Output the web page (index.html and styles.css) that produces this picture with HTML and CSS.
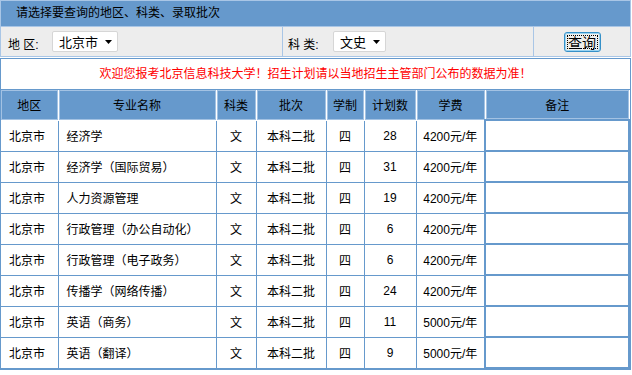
FILE: index.html
```html
<!DOCTYPE html>
<html lang="zh-CN">
<head>
<meta charset="utf-8">
<title>招生计划查询</title>
<link rel="stylesheet" href="styles.css">
</head>
<body>
<div class="page">
  <div class="titlebar">请选择要查询的地区、科类、录取批次</div>
  <form class="filters">
    <div class="fcell fcell-region">
      <span class="flabel flabel-region">地 区:</span>
      <span class="select select-region"><span>北京市</span><svg class="caret" width="7" height="4" viewBox="0 0 7 4"><path d="M0 0H7L3.5 4Z" fill="#000"/></svg></span>
    </div>
    <div class="fcell fcell-type">
      <span class="flabel flabel-type">科 类:</span>
      <span class="select select-type"><span>文史</span><svg class="caret" width="7" height="4" viewBox="0 0 7 4"><path d="M0 0H7L3.5 4Z" fill="#000"/></svg></span>
    </div>
    <div class="fcell fcell-btn">
      <button type="button" class="btn">查询</button>
    </div>
  </form>
  <div class="results">
    <div class="notice">欢迎您报考北京信息科技大学！招生计划请以当地招生主管部门公布的数据为准！</div>
    <table class="grid">
      <thead>
        <tr>
          <th class="c-area">地区</th>
          <th class="c-major">专业名称</th>
          <th class="c-type">科类</th>
          <th class="c-batch">批次</th>
          <th class="c-years">学制</th>
          <th class="c-plan">计划数</th>
          <th class="c-fee">学费</th>
          <th class="c-note">备注</th>
        </tr>
      </thead>
      <tbody>
        <tr><td class="left">北京市</td><td class="left">经济学</td><td>文</td><td>本科二批</td><td>四</td><td>28</td><td>4200元/年</td><td class="note"></td></tr>
        <tr><td class="left">北京市</td><td class="left">经济学（国际贸易）</td><td>文</td><td>本科二批</td><td>四</td><td>31</td><td>4200元/年</td><td class="note"></td></tr>
        <tr><td class="left">北京市</td><td class="left">人力资源管理</td><td>文</td><td>本科二批</td><td>四</td><td>19</td><td>4200元/年</td><td class="note"></td></tr>
        <tr><td class="left">北京市</td><td class="left">行政管理（办公自动化）</td><td>文</td><td>本科二批</td><td>四</td><td>6</td><td>4200元/年</td><td class="note"></td></tr>
        <tr><td class="left">北京市</td><td class="left">行政管理（电子政务）</td><td>文</td><td>本科二批</td><td>四</td><td>6</td><td>4200元/年</td><td class="note"></td></tr>
        <tr><td class="left">北京市</td><td class="left">传播学（网络传播）</td><td>文</td><td>本科二批</td><td>四</td><td>24</td><td>4200元/年</td><td class="note"></td></tr>
        <tr><td class="left">北京市</td><td class="left">英语（商务）</td><td>文</td><td>本科二批</td><td>四</td><td>11</td><td>5000元/年</td><td class="note"></td></tr>
        <tr><td class="left">北京市</td><td class="left">英语（翻译）</td><td>文</td><td>本科二批</td><td>四</td><td>9</td><td>5000元/年</td><td class="note"></td></tr>
      </tbody>
    </table>
  </div>
</div>
</body>
</html>
```

FILE: styles.css
```css
* { box-sizing: border-box; }

body {
  margin: 0;
  background: #fff;
  color: #000;
  font-family: "Liberation Sans", "Noto Sans CJK SC", sans-serif;
  font-size: 12px;
}

.page {
  width: 631px;
}

.titlebar {
  height: 27px;
  line-height: 25px;
  padding-left: 15px;
  background: #6699cc;
  border: 1px solid #a9c6e6;
  white-space: nowrap;
}

.filters {
  display: grid;
  grid-template-columns: 281px 251px 1fr;
  height: 30px;
  margin: 0 0 1px;
  background: #ededed;
  border: 1px solid #a9c6e6;
  border-top: 0;
}

.fcell {
  display: flex;
  align-items: center;
}

.fcell + .fcell {
  border-left: 1px solid #a9c6e6;
}

.fcell-region { padding-left: 7px; }
.fcell-type { padding-left: 5px; }
.fcell-btn { justify-content: center; }

.flabel {
  padding-top: 4px;
  white-space: nowrap;
}
.flabel-region { width: 44px; }
.flabel-type { width: 45px; }

.select {
  display: inline-flex;
  align-items: center;
  justify-content: space-between;
  height: 21px;
  padding: 0 5px 0 6px;
  background: #fff;
  border: 1px solid #d6d6d6;
  border-radius: 2px;
  font-size: 13px;
}
.select-region { width: 66px; }
.select-type { width: 53px; }

.caret { display: block; }

.btn {
  width: 37px;
  height: 20px;
  margin-top: 1px;
  padding: 0;
  font-family: "Noto Sans CJK SC", sans-serif;
  font-size: 14px;
  line-height: 16px;
  color: #000;
  background: #efefec;
  border: 1px solid #3590c8;
  border-radius: 3px;
  box-shadow: inset 0 0 0 1px #9ad4f2;
  outline: 1px dotted #000;
  outline-offset: -4px;
}

.results {
  border: 1px solid #6699cc;
}

.notice {
  height: 31px;
  line-height: 30px;
  text-align: center;
  color: #ff0000;
  border-bottom: 1px solid #6699cc;
  white-space: nowrap;
}

.grid {
  width: 100%;
  table-layout: fixed;
  border-collapse: collapse;
}

.grid th {
  height: 30px;
  padding: 0;
  font-weight: normal;
  background: #6699cc;
  border: 1px solid #fff;
  border-top: none;
  box-shadow: inset 0 0 0 1px #a3c2e3;
}

.grid td {
  height: 31px;
  padding: 0;
  text-align: center;
  border: 1px solid #6699cc;
  white-space: nowrap;
}

.grid th:first-child,
.grid td:first-child {
  border-left: none;
}

.grid td.left {
  text-align: left;
  padding-left: 8px;
}

.grid td.note {
  border: 2px solid #6699cc;
}

.grid th:last-child { border-right: none; }

.c-area { width: 57px; }
.c-major { width: 158px; }
.c-type { width: 40px; }
.c-batch { width: 70px; }
.c-years { width: 38px; }
.c-plan { width: 52px; }
.c-fee { width: 69px; }
.c-note { width: auto; }
```
